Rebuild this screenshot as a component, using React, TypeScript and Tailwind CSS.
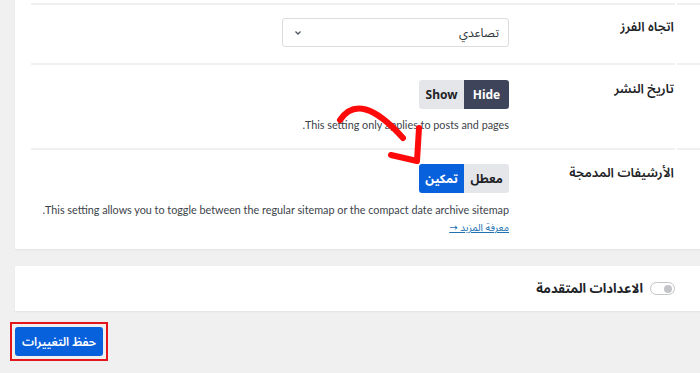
import React, { useState } from "react";

const font = "font-['Noto_Sans','Noto_Sans_Arabic','DejaVu_Sans',sans-serif]";

function Row({
  label,
  children,
  className,
}: {
  label: string;
  children: React.ReactNode;
  className?: string;
}) {
  return (
    <div className="flex gap-[2px]">
      <div className="flex-1 border-t-2 border-[#f0f0f1]" />
      <div className={"w-[644px] border-t-2 border-[#f0f0f1] flex " + (className ?? "")}>
        <div className="w-[166px] -mt-[2px] pr-[1px] text-[13px] font-semibold text-[#1d2327] leading-[20px]">
          {label}
        </div>
        <div className="flex-1 flex flex-col items-start">{children}</div>
      </div>
    </div>
  );
}

function Segmented({
  options,
  value,
  onChange,
  activeClass,
}: {
  options: string[];
  value: string;
  onChange: (v: string) => void;
  activeClass: string;
}) {
  return (
    <div className="flex rounded-[3px] overflow-hidden">
      {options.map((o) => (
        <button
          key={o}
          onClick={() => onChange(o)}
          className={
            "w-[45px] h-[29px] text-[12px] font-bold " +
            (value === o ? activeClass : "bg-[#e5e6ea] text-[#1d2327]")
          }
        >
          {o}
        </button>
      ))}
    </div>
  );
}

const help = "font-['Lato','Noto_Sans_Arabic','DejaVu_Sans',sans-serif] text-[10.8px] text-[#3c434a] leading-[16px]";

export default function App() {
  const [date, setDate] = useState("Hide");
  const [archive, setArchive] = useState("تمكين");
  const [advanced, setAdvanced] = useState(false);

  return (
    <div dir="rtl" className={"relative w-[700px] h-[373px] overflow-hidden bg-[#f0f0f1] " + font}>
      {/* main settings card */}
      <div className="ml-[15px] mr-[-20px] bg-white pl-[16px] pt-[3px] pb-[14px] shadow-[0_1px_2px_rgba(0,0,0,0.06)]">
        <Row label="اتجاه الفرز" className="pt-[13px] h-[60px]">
          <div className="w-[227px] h-[29px] border border-[#dcdcde] rounded-[3px] flex items-center justify-between pr-[9px] pl-[11px] text-[12px] text-[#2c3338]">
            <span>تصاعدي</span>
            <svg width="8" height="6" viewBox="0 0 8 6" fill="none">
              <path d="M1.5 1.5L4 4L6.5 1.5" stroke="#50575e" strokeWidth="1.3" />
            </svg>
          </div>
        </Row>
        <Row label="تاريخ النشر" className="pt-[15px] h-[85px]">
          <Segmented
            options={["Hide", "Show"]}
            value={date}
            onChange={setDate}
            activeClass="bg-[#3e4459] text-white"
          />
          <p className={"mt-[8px] " + help}>This setting only applies to posts and pages.</p>
        </Row>
        <Row label="الأرشيفات المدمجة" className="pt-[14px]">
          <Segmented
            options={["معطل", "تمكين"]}
            value={archive}
            onChange={setArchive}
            activeClass="bg-[#0760dc] text-white"
          />
          <p className={"mt-[9px] " + help}>
            This setting allows you to toggle between the regular sitemap or the compact date archive sitemap.
          </p>
          <a href="#" className="mt-[1px] text-[10px] text-[#2271b1] underline leading-[16px]">
            معرفة المزيد →
          </a>
        </Row>
      </div>

      {/* advanced card */}
      <div className="ml-[15px] mr-[-20px] mt-[17px] h-[45px] bg-white flex items-center pr-[45px] shadow-[0_1px_2px_rgba(0,0,0,0.06)]">
        <button
          onClick={() => setAdvanced(!advanced)}
          className={
            "w-[25px] h-[13px] rounded-full border border-[#c3c4c7] flex items-center px-[2px] " +
            (advanced ? "justify-end bg-[#0760dc]" : "justify-start bg-white")
          }
        >
          <span className={"w-[8px] h-[8px] rounded-full " + (advanced ? "bg-white" : "bg-[#c3c4c7]")} />
        </button>
        <span className="mr-[7px] text-[13px] font-bold text-[#1d2327]">الاعدادات المتقدمة</span>
      </div>

      {/* save */}
      <div className="flex justify-end pl-[10px] mt-[11px]">
        <div className="border-2 border-[#e4161b] p-[3px]">
          <button className="w-[88px] h-[29px] rounded-[3px] bg-[#0760dc] text-white text-[12px] font-semibold">
            حفظ التغييرات
          </button>
        </div>
      </div>

      {/* annotation arrow */}
      <svg className="absolute inset-0 pointer-events-none" width="700" height="373">
        <path d="M340 120 Q360 90 403 138" stroke="#ff0a0a" strokeWidth="6" fill="none" strokeLinecap="round" />
        <path d="M419 128 L417 161 L391 155" stroke="#ff0a0a" strokeWidth="6" fill="none" strokeLinecap="round" strokeLinejoin="round" />
      </svg>
    </div>
  );
}
